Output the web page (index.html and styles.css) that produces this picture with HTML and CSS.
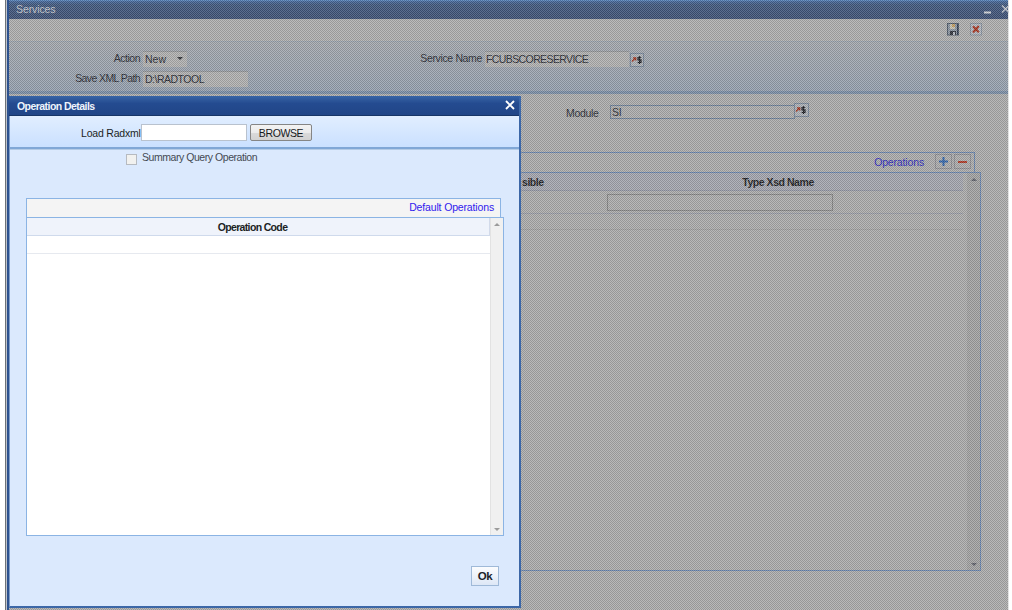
FILE: index.html
```html
<!DOCTYPE html>
<html lang="en">
<head>
    <meta charset="UTF-8">
    <title>Services</title>
    <link rel="stylesheet" href="styles.css">
</head>
<body>
    <div class="window">
        <div class="title-bar">
            <span class="title">Services</span>
            <svg class="win-buttons" width="27" height="19" viewBox="0 0 27 19">
                <path d="M2 11.5h7" stroke="#d5d7db" stroke-width="2"/>
                <path d="M20 4.5l7 7M27 4.5l-7 7" stroke="#c3c7ce" stroke-width="1.4"/>
            </svg>
        </div>

        <div class="toolbar">
            <svg width="12" height="13" viewBox="0 0 12 13">
                <rect x=".5" y=".5" width="11" height="11.5" fill="#8b95a2" stroke="#4d5969"/>
                <rect x="3" y="1" width="5" height="5" fill="#c8c2b0"/>
                <path d="M5 1h3v3H5z" fill="#c5a063"/>
                <path d="M3 8h6v4H3z" fill="#30343d"/>
                <path d="M6 9h2v3H6z" fill="#b8bcc4"/>
                <path d="M10.5 1v11" stroke="#333c50"/>
            </svg>
            <svg width="12" height="13" viewBox="0 0 12 13">
                <rect x=".5" y=".5" width="11" height="11.5" fill="#b4b9c1" stroke="#87929f"/>
                <path d="M3 3.2l5.8 6M8.8 3l-5.8 6.5" stroke="#a83520" stroke-width="2.1"/>
            </svg>
        </div>

        <div class="header-form">
            <div class="form-col col-left">
                <label class="action">Action</label>
                <div class="field select">New <i class="arrow-down"></i></div>
                <label>Save XML Path</label>
                <div class="field path">D:\RADTOOL</div>
            </div>
            <div class="form-col col-right">
                <label>Service Name</label>
                <div class="field service">FCUBSCORESERVICE</div>
                <svg class="lov" width="14" height="14" viewBox="0 0 14 14">
                    <rect x=".5" y=".5" width="13" height="13" fill="#adb1b7" stroke="#77869a"/>
                    <path d="M2 8.5l3-3M3 4.8h2.7v2.7" stroke="#a3341f" stroke-width="1.3"/>
                    <path d="M11.2 4.5H8v2.3h3v2.7H7.6M9.5 3v8" stroke="#1e1f24" stroke-width="1.2"/>
                </svg>
            </div>
        </div>

        <div class="content">
            <div class="module-row">
                <label>Module</label>
                <div class="module-input">SI</div>
                <svg class="lov" width="15" height="14" viewBox="0 0 15 14">
                    <rect x=".5" y=".5" width="14" height="13" fill="#adb1b7" stroke="#77869a"/>
                    <path d="M2 8.5l3-3M3 4.8h2.7v2.7" stroke="#a3341f" stroke-width="1.3"/>
                    <path d="M11.2 4.5H8v2.3h3v2.7H7.6M9.5 3v8" stroke="#1e1f24" stroke-width="1.2"/>
                </svg>
            </div>
            <div class="ops-bar">
                <span class="ops-title">Operations</span>
                <span class="square">
                    <svg width="9" height="9" viewBox="0 0 9 9"><path d="M0 4.5h9M4.5 0v9" stroke="#2f64ab" stroke-width="2"/></svg>
                </span>
                <span class="square">
                    <svg width="9" height="9" viewBox="0 0 9 9"><path d="M0 5h9" stroke="#b03c28" stroke-width="2"/></svg>
                </span>
            </div>
            <div class="ops-table">
                <div class="ops-rows">
                    <div class="ops-head">
                        <span class="visible-col">sible</span>
                        <span class="type-col">Type Xsd Name</span>
                    </div>
                    <div class="ops-row"><span class="xsd-input"></span></div>
                    <div class="ops-row short"></div>
                </div>
                <div class="scrollbar">
                    <i class="arrow-up"></i>
                    <i class="arrow-down"></i>
                </div>
            </div>
        </div>
        <div class="mask"></div>
    </div>

    <div class="dialog">
        <div class="dialog-title">
            <span>Operation Details</span>
            <svg width="10" height="10" viewBox="0 0 10 10"><path d="M1 1l8 8M9 1l-8 8" stroke="#fff" stroke-width="1.9"/></svg>
        </div>
        <div class="load-bar">
            <label>Load Radxml</label>
            <input type="text" class="load-input">
            <button class="browse">BROWSE</button>
        </div>
        <div class="dialog-body">
            <div class="check-row">
                <span class="checkbox"></span>
                <label>Summary Query Operation</label>
            </div>
            <div class="default-bar">Default Operations</div>
            <div class="code-table">
                <div class="code-rows">
                    <div class="code-head">Operation Code</div>
                    <div class="code-row"></div>
                </div>
                <div class="scrollbar light">
                    <i class="arrow-up"></i>
                    <i class="arrow-down"></i>
                </div>
            </div>
            <button class="ok">Ok</button>
        </div>
    </div>
</body>
</html>
```
FILE: styles.css
```css
* {
    box-sizing: border-box;
}

body {
    margin: 0;
    height: 610px;
    overflow: hidden;
    background: #fff;
    font-family: "Liberation Sans", Arial, sans-serif;
    font-size: 10.5px;
    letter-spacing: -0.2px;
    line-height: 13px;
    color: #292b33;
    white-space: nowrap;
}

svg {
    display: block;
    flex: none;
    fill: none;
}

.window {
    position: relative;
    width: 1004px;
    height: 610px;
    margin-left: 5px;
    display: flex;
    flex-direction: column;
    border-left: 1px solid #6d7278;
    border-right: 1px solid #e3e3e3;
    box-shadow: inset 1px 0 #c0c4ca, inset 3px 0 #2d528f;
    padding-left: 3px;
    background: #adadad;
}

/* checkered dimming over the page while the dialog is open */
.mask {
    position: absolute;
    inset: 0 0 0 3px;
    background: repeating-conic-gradient(rgba(0, 0, 0, 0.13) 0 25%, rgba(255, 255, 255, 0.15) 0 50%) 0 0 / 2px 2px;
}

.title-bar {
    display: flex;
    justify-content: space-between;
    height: 19px;
    padding-left: 7px;
    background: linear-gradient(#466a9f, #41597f 20%, #3f5176);
    border-top: 1px solid #5682b9;
    color: #c5c9cf;
}

.title {
    padding-top: 2px;
    letter-spacing: -0.1px;
}

.win-buttons {
    margin-right: -1px;
}

.toolbar {
    display: flex;
    justify-content: flex-end;
    gap: 11px;
    height: 22px;
    padding: 4px 26px 0 0;
    background: #b0b0b0;
}

.header-form {
    display: flex;
    height: 53px;
    padding-top: 9px;
    background: linear-gradient(#a5a9af, #96a1b0);
    border-top: 1px solid #99a2ad;
    border-bottom: 3px solid #7b8ea6;
}

.form-col {
    display: grid;
    align-content: start;
    gap: 4px 3px;
}

.form-col label {
    text-align: right;
    padding-top: 1px;
}

.col-left {
    grid-template-columns: 131px 105px;
    width: 408px;
}

.col-left label {
    letter-spacing: -0.6px;
}

.col-left .action {
    letter-spacing: -0.5px;
}

.col-right {
    grid-template-columns: 65px 144px 15px;
}

.col-right label {
    letter-spacing: -0.35px;
}

.field {
    height: 16px;
    padding: 1px 2px 0;
    background: #b2b2b2;
    border-top: 1px solid #929497;
}

.select {
    display: flex;
    justify-content: space-between;
    width: 44px;
    padding-right: 4px;
    letter-spacing: 0;
}

.path {
    letter-spacing: -0.5px;
}

.select .arrow-down {
    margin-top: 4px;
}

.service {
    padding-left: 1px;
    letter-spacing: -0.6px;
}

.col-right .lov {
    margin: 2px 0 0 -2px;
}

.arrow-down,
.arrow-up {
    width: 0;
    height: 0;
    border: 3px solid transparent;
}

.arrow-down {
    border-top-color: #303238;
    border-bottom: 0;
}

.arrow-up {
    border-bottom-color: #60636c;
    border-top: 0;
}

.content {
    padding: 8px 27px 0 17px;
}

.module-row {
    display: flex;
    height: 50px;
    padding-left: 540px;
}

.module-row label {
    width: 44px;
    padding-top: 5px;
    letter-spacing: -0.3px;
}

.module-input {
    width: 185px;
    height: 14px;
    margin-top: 3px;
    padding-left: 1px;
    border: 1px solid #6b7f99;
    line-height: 12px;
}

.module-row .lov {
    margin-top: 1px;
    margin-left: -1px;
}

.ops-bar {
    display: flex;
    justify-content: flex-end;
    align-items: flex-start;
    gap: 2px;
    height: 20px;
    margin-right: 6px;
    padding: 1px 3px 0 0;
    border: 1px solid #6985af;
    border-bottom: 0;
}

.ops-title {
    padding: 2px 9px 0 0;
    color: #2a27c0;
    letter-spacing: -0.15px;
}

.square {
    display: flex;
    align-items: center;
    justify-content: center;
    width: 17px;
    height: 15px;
    border: 1px solid #8e8f94;
}

.ops-table {
    display: flex;
    justify-content: space-between;
    height: 399px;
    border: 1px solid #6985af;
}

.ops-rows {
    width: 936px;
}

.ops-head {
    display: flex;
    height: 18px;
    padding: 3px 0 0 495px;
    background: #a5a7b0;
    border-bottom: 1px solid #9295a3;
    font-weight: bold;
    letter-spacing: -0.45px;
    color: #1d1d22;
}

.visible-col {
    width: 80px;
}

.type-col {
    width: 352px;
    text-align: center;
}

.ops-row {
    height: 23px;
    padding: 3px 0 0 580px;
    border-bottom: 1px solid #989ba6;
}

.short {
    height: 16px;
    border-color: #a0a0a0;
}

.xsd-input {
    display: block;
    width: 226px;
    height: 17px;
    border: 1px solid #858585;
}

.scrollbar {
    display: flex;
    flex-direction: column;
    justify-content: space-between;
    align-items: center;
    width: 13px;
    padding: 5px 0 4px;
    background: #a3a3a3;
}

.ops-table .arrow-down {
    border-top-color: #60636c;
}

.scrollbar.light {
    background: #f0f0f0;
    border-left: 1px solid #e2e2e2;
}

.light .arrow-up {
    border-bottom-color: #9b9b9b;
}

.light .arrow-down {
    border-top-color: #9b9b9b;
}

/* dialog */
.dialog {
    position: absolute;
    left: 9px;
    top: 96px;
    width: 512px;
    height: 512px;
    display: flex;
    flex-direction: column;
    border: 2px solid #3c67a7;
    border-top: 0;
    border-left: 1px solid #7d9cc8;
    background: #dbe9fd;
    color: #1c1f24;
}

.dialog-title {
    display: flex;
    justify-content: space-between;
    height: 20px;
    margin-left: -1px;
    padding: 4px 4px 0 8px;
    background: linear-gradient(#3864a5, #244b90 40%, #214587);
    border-bottom: 1px solid #173567;
    color: #eff4fc;
    font-weight: bold;
    letter-spacing: -0.55px;
}

.load-bar {
    display: flex;
    height: 33px;
    padding: 8px 0 0 71px;
    background: linear-gradient(#e1eeff, #cae0ff);
    border-bottom: 2px solid #80a7d6;
    box-shadow: 0 1px #b4cbe6;
}

.load-bar label {
    width: 60px;
    padding-top: 3px;
    letter-spacing: -0.2px;
}

.load-input {
    width: 106px;
    height: 17px;
    padding: 0 2px;
    border: 1px solid #b9c2ce;
    background: #fff;
}

.browse {
    width: 62px;
    height: 17px;
    margin-left: 3px;
    padding: 0;
    border: 1px solid #858585;
    border-radius: 2px;
    background: linear-gradient(#f3f3f3, #ebebeb 50%, #dadada 50%, #d2d2d2);
    font: 10.5px/14px "Liberation Sans", Arial, sans-serif;
    letter-spacing: -0.4px;
    color: #16181b;
}

.dialog-body {
    display: flex;
    flex-direction: column;
    padding: 2px 16px 0;
}

.check-row {
    display: flex;
    gap: 5px;
    height: 47px;
    padding-left: 100px;
    color: #444953;
}

.check-row label {
    letter-spacing: -0.45px;
}

.checkbox {
    width: 11px;
    height: 11px;
    margin-top: 3px;
    border: 1px solid #b6bac0;
    background: #f1f1ef;
}

.default-bar {
    width: 475px;
    height: 19px;
    padding: 2px 6px 0 0;
    border: 1px solid #8bb4e4;
    border-bottom: 0;
    background: #f4f4f4;
    text-align: right;
    color: #3020ee;
    letter-spacing: -0.15px;
}

.code-table {
    display: flex;
    justify-content: space-between;
    width: 478px;
    height: 319px;
    border: 1px solid #8bb4e4;
    background: #fff;
}

.code-rows {
    width: 463px;
}

.code-head {
    height: 18px;
    padding: 3px 11px 0 0;
    background: #eff3fb;
    border-right: 1px solid #d2daea;
    border-bottom: 1px solid #cfdaec;
    text-align: center;
    font-weight: bold;
    letter-spacing: -0.65px;
}

.code-row {
    height: 18px;
    border-bottom: 1px solid #e6e9ef;
}

.ok {
    width: 28px;
    height: 20px;
    margin: 30px 0 0 445px;
    padding: 0;
    border: 1px solid #9fb9d8;
    background: linear-gradient(#fbfcfe, #dde7f6);
    font: bold 11.5px/18px "Liberation Sans", Arial, sans-serif;
    letter-spacing: -0.3px;
    color: #1b1f2a;
}
```
